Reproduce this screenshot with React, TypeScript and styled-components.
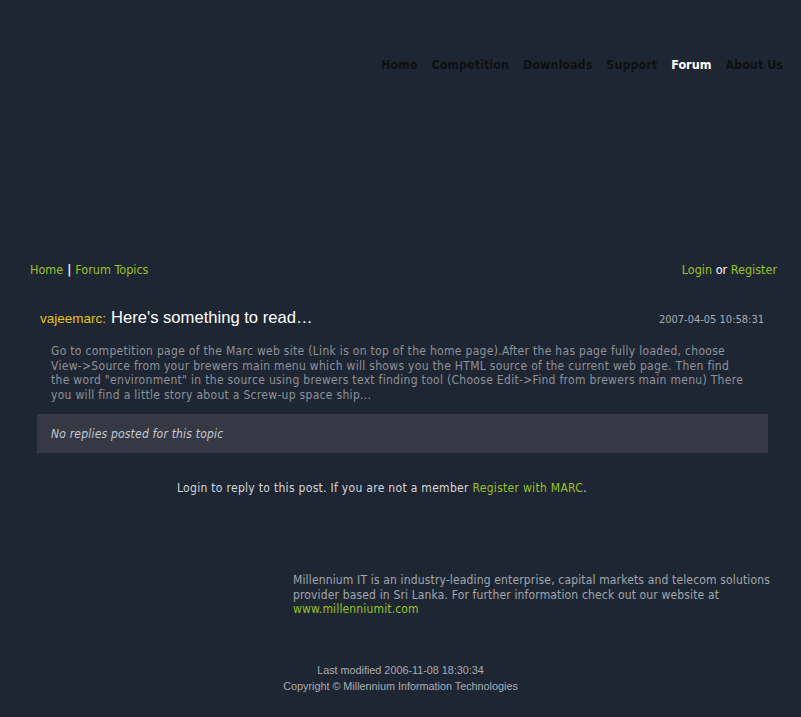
import React from "react";
import styled, { createGlobalStyle } from "styled-components";

const Global = createGlobalStyle`
  html, body { margin: 0; padding: 0; background: #1f2633; }
  body { font-family: "DejaVu Sans Condensed", "DejaVu Sans", sans-serif; }
  a { text-decoration: none; }
`;

const Page = styled.div`
  width: 801px;
  min-height: 717px;
  background: #1f2633;
  display: flex;
  flex-direction: column;
`;

const Header = styled.header`
  height: 255px;
  display: flex;
  justify-content: flex-end;
  align-items: flex-start;
  padding: 57px 18px 0 0;
  box-sizing: border-box;
`;

const Nav = styled.nav`
  display: flex;
  gap: 14px;
`;

const NavLink = styled.a<{ $active?: boolean }>`
  font-family: "DejaVu Sans Condensed", "DejaVu Sans", sans-serif;
  font-weight: bold;
  font-size: 12.5px;
  color: ${(p) => (p.$active ? "#ffffff" : "#0d0f14")};
`;

const Crumbs = styled.div`
  display: flex;
  justify-content: space-between;
  padding: 7px 24px 0 30px;
  font-family: "DejaVu Sans Condensed", "DejaVu Sans", sans-serif;
  font-size: 12.5px;
  color: #ffffff;
`;

const GreenLink = styled.a`
  color: #9ac224;
`;

const Sep = styled.span`
  color: #ffffff;
  font-weight: bold;
  margin: 0 4px;
`;

const Post = styled.section`
  padding: 31px 33px 0 37px;
`;

const PostHead = styled.div`
  display: flex;
  justify-content: space-between;
  align-items: baseline;
  padding: 0 4px 0 3px;
`;

const Author = styled.span`
  font-family: "Liberation Sans", Arial, sans-serif;
  font-size: 13.5px;
  color: #e6c21a;
`;

const Title = styled.span`
  font-family: "Liberation Sans", Arial, sans-serif;
  font-size: 16.6px;
  color: #ffffff;
  margin-left: 5px;
`;

const DateText = styled.span`
  font-family: "DejaVu Sans Condensed", sans-serif;
  font-size: 11px;
  color: #a8acb4;
`;

const Body = styled.p`
  margin: 16px 0 0 14px;
  width: 696px;
  font-family: "DejaVu Sans Condensed", sans-serif;
  font-size: 12px;
  letter-spacing: 0.3px;
  line-height: 14.5px;
  color: #8e9299;
`;

const RepliesPanel = styled.div`
  margin-top: 12px;
  height: 39px;
  background: #363944;
  display: flex;
  align-items: center;
  padding-left: 14px;
  font-family: "DejaVu Sans Condensed", sans-serif;
  font-style: italic;
  font-size: 12px;
  letter-spacing: 0.2px;
  color: #c8cad0;
`;

const ReplyNote = styled.p`
  margin: 28px 0 0 177px;
  font-family: "DejaVu Sans Condensed", sans-serif;
  font-size: 12px;
  letter-spacing: 0.3px;
  color: #d6d8dc;
`;

const About = styled.p`
  margin: 78px 0 0 293px;
  width: 490px;
  font-family: "DejaVu Sans Condensed", sans-serif;
  font-size: 12px;
  letter-spacing: 0.15px;
  line-height: 14.5px;
  color: #a2a6ad;
`;

const Footer = styled.footer`
  margin-top: 45px;
  text-align: center;
  font-family: "Liberation Sans", Arial, sans-serif;
  font-size: 10.8px;
  line-height: 16px;
  color: #a8acb4;
`;

export default function App() {
  const nav = ["Home", "Competition", "Downloads", "Support", "Forum", "About Us"];
  return (
    <Page>
      <Global />
      <Header>
        <Nav>
          {nav.map((n) => (
            <NavLink key={n} $active={n === "Forum"}>
              {n}
            </NavLink>
          ))}
        </Nav>
      </Header>
      <Crumbs>
        <span>
          <GreenLink>Home</GreenLink>
          <Sep>|</Sep>
          <GreenLink>Forum Topics</GreenLink>
        </span>
        <span>
          <GreenLink>Login</GreenLink> or <GreenLink>Register</GreenLink>
        </span>
      </Crumbs>
      <Post>
        <PostHead>
          <span>
            <Author>vajeemarc:</Author>
            <Title>Here's something to read…</Title>
          </span>
          <DateText>2007-04-05 10:58:31</DateText>
        </PostHead>
        <Body>
          Go to competition page of the Marc web site (Link is on top of the home page).After the has
          page fully loaded, choose View-&gt;Source from your brewers main menu which will shows you the
          HTML source of the current web page. Then find the word "environment" in the source using
          brewers text finding tool (Choose Edit-&gt;Find from brewers main menu) There you will find a
          little story about a Screw-up space ship...
        </Body>
        <RepliesPanel>No replies posted for this topic</RepliesPanel>
      </Post>
      <ReplyNote>
        Login to reply to this post. If you are not a member <GreenLink>Register with MARC</GreenLink>.
      </ReplyNote>
      <About>
        Millennium IT is an industry-leading enterprise, capital markets and telecom solutions provider
        based in Sri Lanka. For further information check out our website at
        <br />
        <GreenLink>www.millenniumit.com</GreenLink>
      </About>
      <Footer>
        Last modified 2006-11-08 18:30:34
        <br />
        Copyright © Millennium Information Technologies
      </Footer>
    </Page>
  );
}
